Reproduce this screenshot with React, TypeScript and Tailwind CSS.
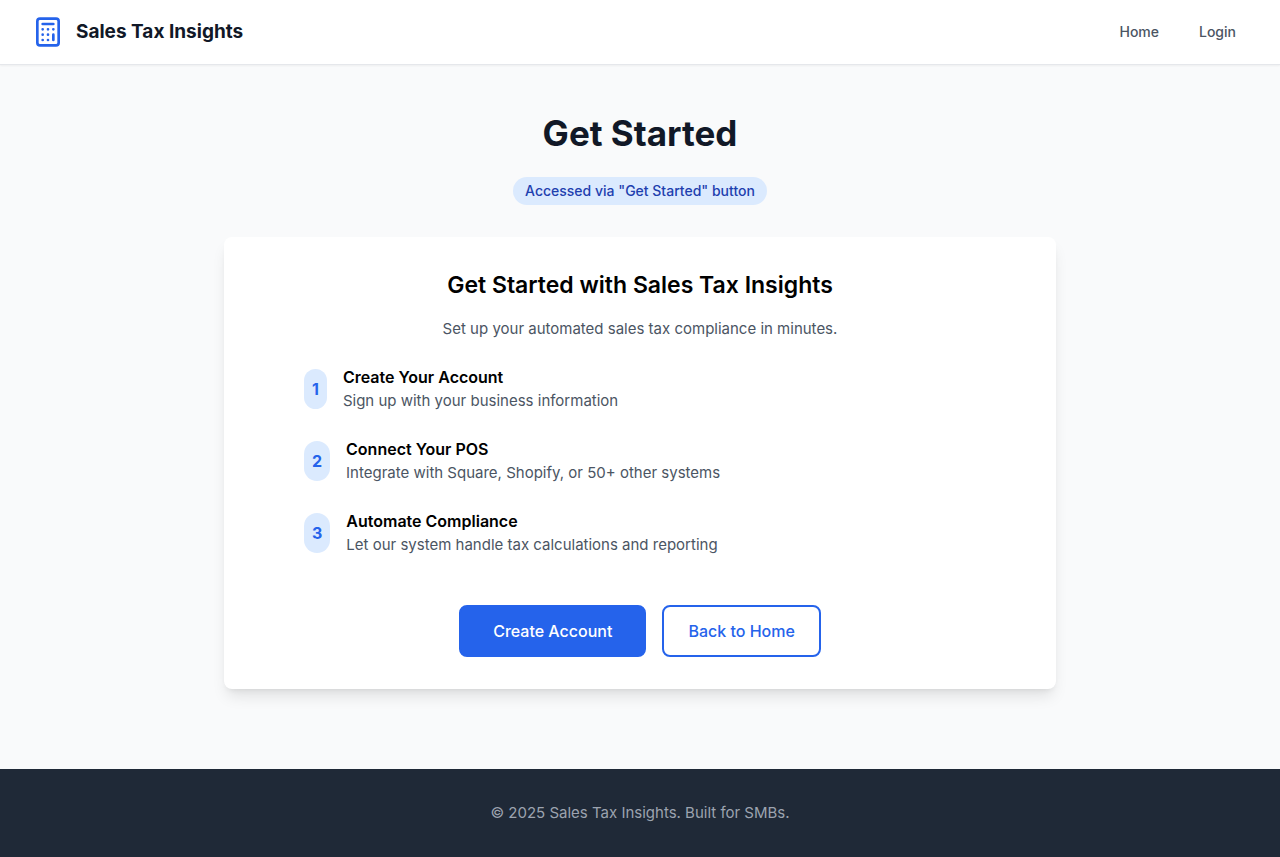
const steps = [
  { title: "Create Your Account", text: "Sign up with your business information" },
  { title: "Connect Your POS", text: "Integrate with Square, Shopify, or 50+ other systems" },
  { title: "Automate Compliance", text: "Let our system handle tax calculations and reporting" },
];

function CalculatorIcon() {
  return (
    <svg className="h-8 w-8 text-[#2563eb]" viewBox="0 0 24 24" fill="none" stroke="currentColor" strokeWidth="2" strokeLinecap="round" strokeLinejoin="round" aria-hidden="true">
      <rect x="4" y="2" width="16" height="20" rx="2" />
      <path d="M8 6h8M16 14v4M16 10h.01M12 10h.01M8 10h.01M12 14h.01M8 14h.01M12 18h.01M8 18h.01" />
    </svg>
  );
}

export default function App() {
  return (
    <div className="flex min-h-screen flex-col bg-[#f9fafb] font-['Inter',sans-serif] text-black antialiased">
      <header className="border-b border-[#e5e7eb] bg-white shadow-xs">
        <nav className="flex h-16 items-center justify-between px-8">
          <a href="#" className="flex items-center gap-3">
            <CalculatorIcon />
            <span className="text-[19px] leading-8 font-bold text-[#111827]">Sales Tax Insights</span>
          </a>
          <div className="flex gap-4 text-sm font-medium text-[#4b5563]">
            <a href="#" className="px-3 py-2">Home</a>
            <a href="#" className="px-3 py-2">Login</a>
          </div>
        </nav>
      </header>
      <main className="mx-auto w-full max-w-4xl grow px-8 pt-12 pb-20 text-center">
        <h1 className="mb-6 text-[35px] leading-10 font-bold text-[#111827]">Get Started</h1>
        <span className="inline-flex rounded-full bg-[#dbeafe] px-3 py-1 text-sm font-medium text-[#1e40af]">Accessed via "Get Started" button</span>
        <section className="mt-8 rounded-lg bg-white p-8 shadow-lg">
          <h2 className="mb-4 text-[23px] leading-8 font-semibold">Get Started with Sales Tax Insights</h2>
          <p className="mb-6 text-[15px] leading-6 text-[#4b5563]">Set up your automated sales tax compliance in minutes.</p>
          <ol className="mx-auto flex max-w-2xl flex-col gap-6 text-left">
            {steps.map((step, i) => (
              <li key={step.title} className="flex items-center gap-4">
                <span className="rounded-full bg-[#dbeafe] p-2 font-bold text-[#2563eb]">{i + 1}</span>
                <div>
                  <h3 className="font-semibold">{step.title}</h3>
                  <p className="text-[15px] leading-6 text-[#4b5563]">{step.text}</p>
                </div>
              </li>
            ))}
          </ol>
          <div className="mt-12 flex justify-center gap-4">
            <button className="rounded-lg border-2 border-[#2563eb] bg-[#2563eb] px-8 py-3 font-medium text-white">Create Account</button>
            <button className="rounded-lg border-2 border-[#2563eb] px-6 py-3 font-medium text-[#2563eb]">Back to Home</button>
          </div>
        </section>
      </main>
      <footer className="bg-[#1f2937] py-8 text-center text-[15px] leading-6 text-[#9ca3af]">
        <p>© 2025 Sales Tax Insights. Built for SMBs.</p>
      </footer>
    </div>
  );
}
